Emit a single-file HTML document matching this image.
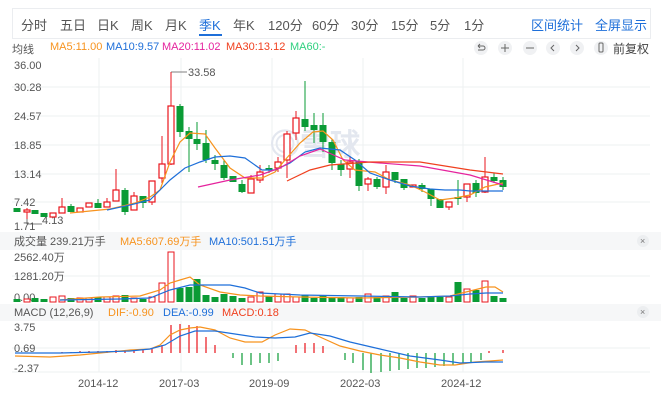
<!DOCTYPE html>
<html><head><meta charset="utf-8"><style>
body{margin:0;width:661px;height:400px;overflow:hidden;background:#fff;font-family:"Liberation Sans","Noto Sans CJK SC",sans-serif;position:relative}
.t{position:absolute;white-space:nowrap}
.tab{top:15px;font-size:13px;color:#555}
</style></head><body>
<div style="position:absolute;left:12px;top:8px;width:637px;height:29px;border:1px solid #ebedf0"></div>
<div class="t tab" style="left:21px">分时</div>
<div class="t tab" style="left:60px">五日</div>
<div class="t tab" style="left:97px">日K</div>
<div class="t tab" style="left:131px">周K</div>
<div class="t tab" style="left:165px">月K</div>
<div class="t tab" style="left:199px;color:#1e6fd9">季K</div>
<div style="position:absolute;left:199px;top:34px;width:23px;height:2px;background:#1e6fd9"></div>
<div class="t tab" style="left:233px">年K</div>
<div class="t tab" style="left:268px">120分</div>
<div class="t tab" style="left:312px">60分</div>
<div class="t tab" style="left:351px">30分</div>
<div class="t tab" style="left:391px">15分</div>
<div class="t tab" style="left:430px">5分</div>
<div class="t tab" style="left:464px">1分</div>
<div class="t tab" style="left:531px;color:#1e6fd9">区间统计</div>
<div class="t tab" style="left:595px;color:#1e6fd9">全屏显示</div>
<div class="t" style="left:12px;top:41px;font-size:11px;color:#555">均线</div>
<div class="t" style="left:50px;top:41px;font-size:11px;color:#f7931e">MA5:11.00</div>
<div class="t" style="left:106px;top:41px;font-size:11px;color:#1e6fd9">MA10:9.57</div>
<div class="t" style="left:162px;top:41px;font-size:11px;color:#e5239d">MA20:11.02</div>
<div class="t" style="left:226px;top:41px;font-size:11px;color:#f0401f">MA30:13.12</div>
<div class="t" style="left:290px;top:41px;font-size:11px;color:#2fd07f">MA60:-</div>
<div class="t" style="left:613px;top:40px;font-size:12px;color:#444">前复权</div>
<svg width="661" height="400" style="position:absolute;left:0;top:0" font-family="Liberation Sans,sans-serif">
<g fill="#f0f1f3"><circle cx="481" cy="48" r="7"/><circle cx="505" cy="48" r="7"/><circle cx="530" cy="48" r="7"/><circle cx="553" cy="48" r="7"/><circle cx="577" cy="48" r="7"/><circle cx="601" cy="48" r="7"/></g>
<g stroke="#666" stroke-width="1" fill="none"><path d="M478 46h5a2 2 0 0 1 0 4h-5M478 46l2-2M478 46l2 2"/><path d="M501 48h8M505 44v8"/><path d="M526 48h8"/><path d="M554 45l-3 3 3 3"/><path d="M576 45l3 3-3 3"/><rect x="599" y="43" width="4" height="9" rx="1"/></g>
<g stroke="#eef0f2" stroke-width="1">
<path d="M99 58V230M181 58V230M272 58V230M363 58V230M463 58V230"/>
<path d="M12 87H650M12 116H650M12 145H650M12 174H650M12 202H650"/>
<path d="M99 250V303M181 250V303M272 250V303M363 250V303M463 250V303M12 276H650"/>
<path d="M99 320V372M181 320V372M272 320V372M363 320V372M463 320V372M12 348H650M12 372H650"/>
</g>
<rect x="0" y="232" width="661" height="18" fill="#f6f7f8"/>
<rect x="0" y="304" width="661" height="17" fill="#f6f7f8"/>
<g font-size="11" fill="#555">
<text x="14" y="69">36.00</text><text x="14" y="91">30.28</text><text x="14" y="120">24.57</text><text x="14" y="149">18.85</text><text x="14" y="178">13.14</text><text x="14" y="206">7.42</text><text x="14" y="230">1.71</text>
<text x="14" y="245">成交量 239.21万手</text>
<text x="14" y="261">2562.40万</text><text x="14" y="280">1281.20万</text><text x="14" y="301">0.00</text>
<text x="14" y="316">MACD (12,26,9)</text>
<text x="14" y="331">3.75</text><text x="14" y="352">0.69</text><text x="14" y="372">-2.37</text>
<text x="78" y="387">2014-12</text><text x="159" y="387">2017-03</text><text x="249" y="387">2019-09</text><text x="340" y="387">2022-03</text><text x="441" y="387">2024-12</text>
</g>
<text x="120" y="245" font-size="11" fill="#f7931e">MA5:607.69万手</text>
<text x="209" y="245" font-size="11" fill="#1e6fd9">MA10:501.51万手</text>
<text x="108" y="316" font-size="11" fill="#f7931e">DIF:-0.90</text>
<text x="163" y="316" font-size="11" fill="#1e6fd9">DEA:-0.99</text>
<text x="222" y="316" font-size="11" fill="#f0401f">MACD:0.18</text>
<circle cx="643" cy="241" r="6" fill="#eceef0"/><text x="640" y="244" font-size="9" fill="#777">×</text>
<circle cx="643" cy="312" r="6" fill="#eceef0"/><text x="640" y="315" font-size="9" fill="#777">×</text>
<text x="270" y="155" font-size="30" fill="#e3e7ef" font-weight="bold">◎雪球</text>
<path d="M171 72H187M27 219V224H42" stroke="#555" stroke-width="0.8" fill="none"/>
<text x="188" y="76" font-size="11" fill="#555">33.58</text>
<text x="42" y="224" font-size="11" fill="#555">4.13</text>
<!-- green wicks -->
<path stroke="#0a9b35" stroke-width="1" fill="none" d="M71 204V212M98 199V208M125 188V215M143 196V208M180 104V137M189 127V172M197 122V150M206 130V163M215 155V170M224 160V180M242 180V193M269 165V173M305 81V131M314 113V143M323 113V152M332 139V170M341 160V176M359 159V191M377 177V189M395 172V183M404 179V190M422 183V192M431 189V206M458 180V205M476 180V197M494 173V183M503 177V190"/>
<!-- red wicks -->
<path stroke="#e8141c" stroke-width="1" fill="none" d="M27 208V219M62 198V213M107 198V207M116 169V201M134 192V210M152 181V205M162 136V183M171 72V165M251 175V193M260 165V183M278 157V172M287 131V178M296 111V140M350 157V178M368 177V191M386 165V194M449 202V210M467 184V202M485 157V193"/>
<!-- green bodies -->
<g fill="#0a9b35">
<rect x="13.5" y="208" width="7" height="4"/><rect x="31.5" y="210" width="7" height="4"/><rect x="40.5" y="213" width="7" height="4"/><rect x="67.5" y="206" width="7" height="6"/><rect x="94.5" y="203" width="7" height="5"/><rect x="121.5" y="190" width="7" height="22"/><rect x="139.5" y="196" width="7" height="7"/><rect x="176.5" y="106" width="7" height="26"/><rect x="185.5" y="131" width="7" height="8"/><rect x="193.5" y="139" width="7" height="5"/><rect x="202.5" y="143" width="7" height="17"/><rect x="211.5" y="160" width="7" height="4"/><rect x="220.5" y="165" width="7" height="13"/><rect x="229.5" y="176" width="7" height="6"/><rect x="238.5" y="184" width="7" height="8"/><rect x="265.5" y="168" width="7" height="2"/><rect x="301.5" y="119" width="7" height="8"/><rect x="310.5" y="125" width="7" height="5"/><rect x="319.5" y="125" width="7" height="17"/><rect x="328.5" y="142" width="7" height="21"/><rect x="337.5" y="164" width="7" height="6"/><rect x="355.5" y="161" width="7" height="25"/><rect x="373.5" y="179" width="7" height="8"/><rect x="391.5" y="172" width="7" height="8"/><rect x="400.5" y="179" width="7" height="9"/><rect x="418.5" y="185" width="7" height="4"/><rect x="427.5" y="189" width="7" height="10"/><rect x="436.5" y="199" width="7" height="9"/><rect x="454.5" y="197" width="7" height="2"/><rect x="472.5" y="183" width="7" height="10"/><rect x="490.5" y="177" width="7" height="4"/><rect x="499.5" y="180" width="7" height="7"/>
</g>
<!-- red bodies -->
<g fill="#fff" stroke="#e8141c" stroke-width="1.2">
<rect x="24" y="210" width="6" height="2"/><rect x="50" y="213" width="6" height="4"/><rect x="59" y="207" width="6" height="6"/><rect x="77" y="208" width="6" height="4"/><rect x="86" y="203" width="6" height="4"/><rect x="104" y="202" width="6" height="5"/><rect x="113" y="190" width="6" height="11"/><rect x="131" y="196" width="6" height="14"/><rect x="149" y="181" width="6" height="21"/><rect x="159" y="164" width="6" height="14"/><rect x="168" y="106" width="6" height="58"/><rect x="248" y="179" width="6" height="14"/><rect x="257" y="172" width="6" height="8"/><rect x="275" y="162" width="6" height="6"/><rect x="284" y="134" width="6" height="26"/><rect x="293" y="118" width="6" height="15"/><rect x="347" y="162" width="6" height="7"/><rect x="365" y="179" width="6" height="5"/><rect x="383" y="172" width="6" height="15"/><rect x="410" y="185" width="6" height="2"/><rect x="446" y="202" width="6" height="5"/><rect x="464" y="184" width="6" height="13"/><rect x="482" y="177" width="6" height="15"/>
</g>
<!-- volume green -->
<g fill="#0a9b35">
<rect x="13.5" y="299" width="7" height="3"/><rect x="31.5" y="298" width="7" height="4"/><rect x="40.5" y="299" width="7" height="3"/><rect x="67.5" y="298" width="7" height="4"/><rect x="94.5" y="297" width="7" height="5"/><rect x="121.5" y="295" width="7" height="7"/><rect x="139.5" y="299" width="7" height="3"/><rect x="176.5" y="288" width="7" height="14"/><rect x="185.5" y="287" width="7" height="15"/><rect x="193.5" y="279" width="7" height="23"/><rect x="202.5" y="295" width="7" height="7"/><rect x="211.5" y="297" width="7" height="5"/><rect x="220.5" y="294" width="7" height="8"/><rect x="229.5" y="296" width="7" height="6"/><rect x="238.5" y="298" width="7" height="4"/><rect x="265.5" y="296" width="7" height="6"/><rect x="301.5" y="295" width="7" height="7"/><rect x="310.5" y="298" width="7" height="4"/><rect x="319.5" y="295" width="7" height="7"/><rect x="328.5" y="297" width="7" height="5"/><rect x="337.5" y="297" width="7" height="5"/><rect x="355.5" y="297" width="7" height="5"/><rect x="373.5" y="297" width="7" height="5"/><rect x="391.5" y="292" width="7" height="10"/><rect x="400.5" y="298" width="7" height="4"/><rect x="418.5" y="298" width="7" height="4"/><rect x="427.5" y="296" width="7" height="6"/><rect x="436.5" y="297" width="7" height="5"/><rect x="454.5" y="282" width="7" height="20"/><rect x="472.5" y="290" width="7" height="12"/><rect x="490.5" y="296" width="7" height="6"/><rect x="499.5" y="298" width="7" height="4"/>
</g>
<g fill="#fff" stroke="#e8141c" stroke-width="1">
<rect x="24" y="299" width="6" height="3"/><rect x="50" y="297" width="6" height="5"/><rect x="59" y="296" width="6" height="6"/><rect x="77" y="298" width="6" height="4"/><rect x="86" y="298" width="6" height="4"/><rect x="104" y="297" width="6" height="5"/><rect x="113" y="296" width="6" height="6"/><rect x="131" y="298" width="6" height="4"/><rect x="149" y="297" width="6" height="5"/><rect x="159" y="283" width="6" height="19"/><rect x="168" y="252" width="6" height="50"/><rect x="248" y="297" width="6" height="5"/><rect x="257" y="292" width="6" height="10"/><rect x="275" y="294" width="6" height="8"/><rect x="284" y="294" width="6" height="8"/><rect x="293" y="297" width="6" height="5"/><rect x="347" y="298" width="6" height="4"/><rect x="365" y="294" width="6" height="8"/><rect x="383" y="296" width="6" height="6"/><rect x="410" y="296" width="6" height="6"/><rect x="446" y="297" width="6" height="5"/><rect x="464" y="289" width="6" height="13"/><rect x="482" y="281" width="6" height="21"/>
</g>
<!-- macd bars -->
<path stroke="#e8141c" stroke-width="1.2" fill="none" d="M62 353V352M71 353V352M80 353V351M89 353V351M98 353V351M107 353V351M116 353V350M125 353V350M134 353V350M143 353V349M152 353V348M162 353V345M171 353V325M180 353V324M189 353V325M197 353V326M206 353V337M215 353V345M296 353V345M305 353V343M314 353V343M323 353V346M489 353V351M503 353V350"/>
<path stroke="#0a9b35" stroke-width="1.2" fill="none" d="M233 353V358M242 353V365M251 353V365M260 353V363M269 353V363M278 353V361M345 353V360M353 353V363M363 353V370M371 353V373M381 353V372M390 353V371M399 353V370M408 353V369M417 353V368M426 353V368M435 353V367M444 353V366M453 353V365M463 353V363M471 353V362M481 353V360"/>
<g fill="none" stroke-width="1.2">
<polyline stroke="#f7931e" points="70,213 110,209 135,203 150,197 160,190 170,162 180,142 190,133 205,134 215,148 230,168 245,178 262,178 275,172 285,160 300,143 313,132 323,131 333,140 343,160 355,170 375,172 390,180 410,185 425,192 440,200 455,198 470,195 485,187 503,183"/>
<polyline stroke="#1e6fd9" points="107,210 130,205 150,200 160,190 170,180 185,168 200,162 215,157 230,156 245,158 262,170 275,170 290,163 305,152 320,148 340,150 355,160 370,173 390,180 410,186 430,189 445,190 460,190 470,191 503,191"/>
<polyline stroke="#e5239d" points="198,187 230,180 260,175 280,168 300,156 320,149 345,160 380,163 420,166 470,175 503,185"/>
<polyline stroke="#f0401f" points="287,181 310,170 330,165 370,162 420,162 470,170 503,174"/>
<polyline stroke="#f7931e" points="60,300 100,297 140,296 160,290 170,283 180,280 190,277 200,285 220,292 240,295 260,296 300,297 360,298 420,297 450,296 470,291 486,287 495,287 503,292"/>
<polyline stroke="#1e6fd9" points="60,300 120,299 150,298 170,290 190,285 210,285 230,285 245,288 260,293 300,295 360,296 420,297 450,296 470,294 486,293 503,293"/>
<polyline stroke="#f7931e" points="15,356 50,357 80,355 110,352 130,350 150,349 160,345 170,335 180,330 190,328 200,327 215,330 230,338 245,342 262,342 275,335 290,329 305,330 320,337 340,346 360,351 380,355 400,358 420,362 440,365 455,365 475,362 490,361 503,360"/>
<polyline stroke="#1e6fd9" points="15,353 60,353 100,352 130,351 150,349 165,345 180,336 195,331 215,331 235,334 255,337 275,338 295,337 310,333 330,336 350,342 380,349 410,356 440,360 460,363 485,362 503,362"/>
</g>
</svg>
</body></html>
